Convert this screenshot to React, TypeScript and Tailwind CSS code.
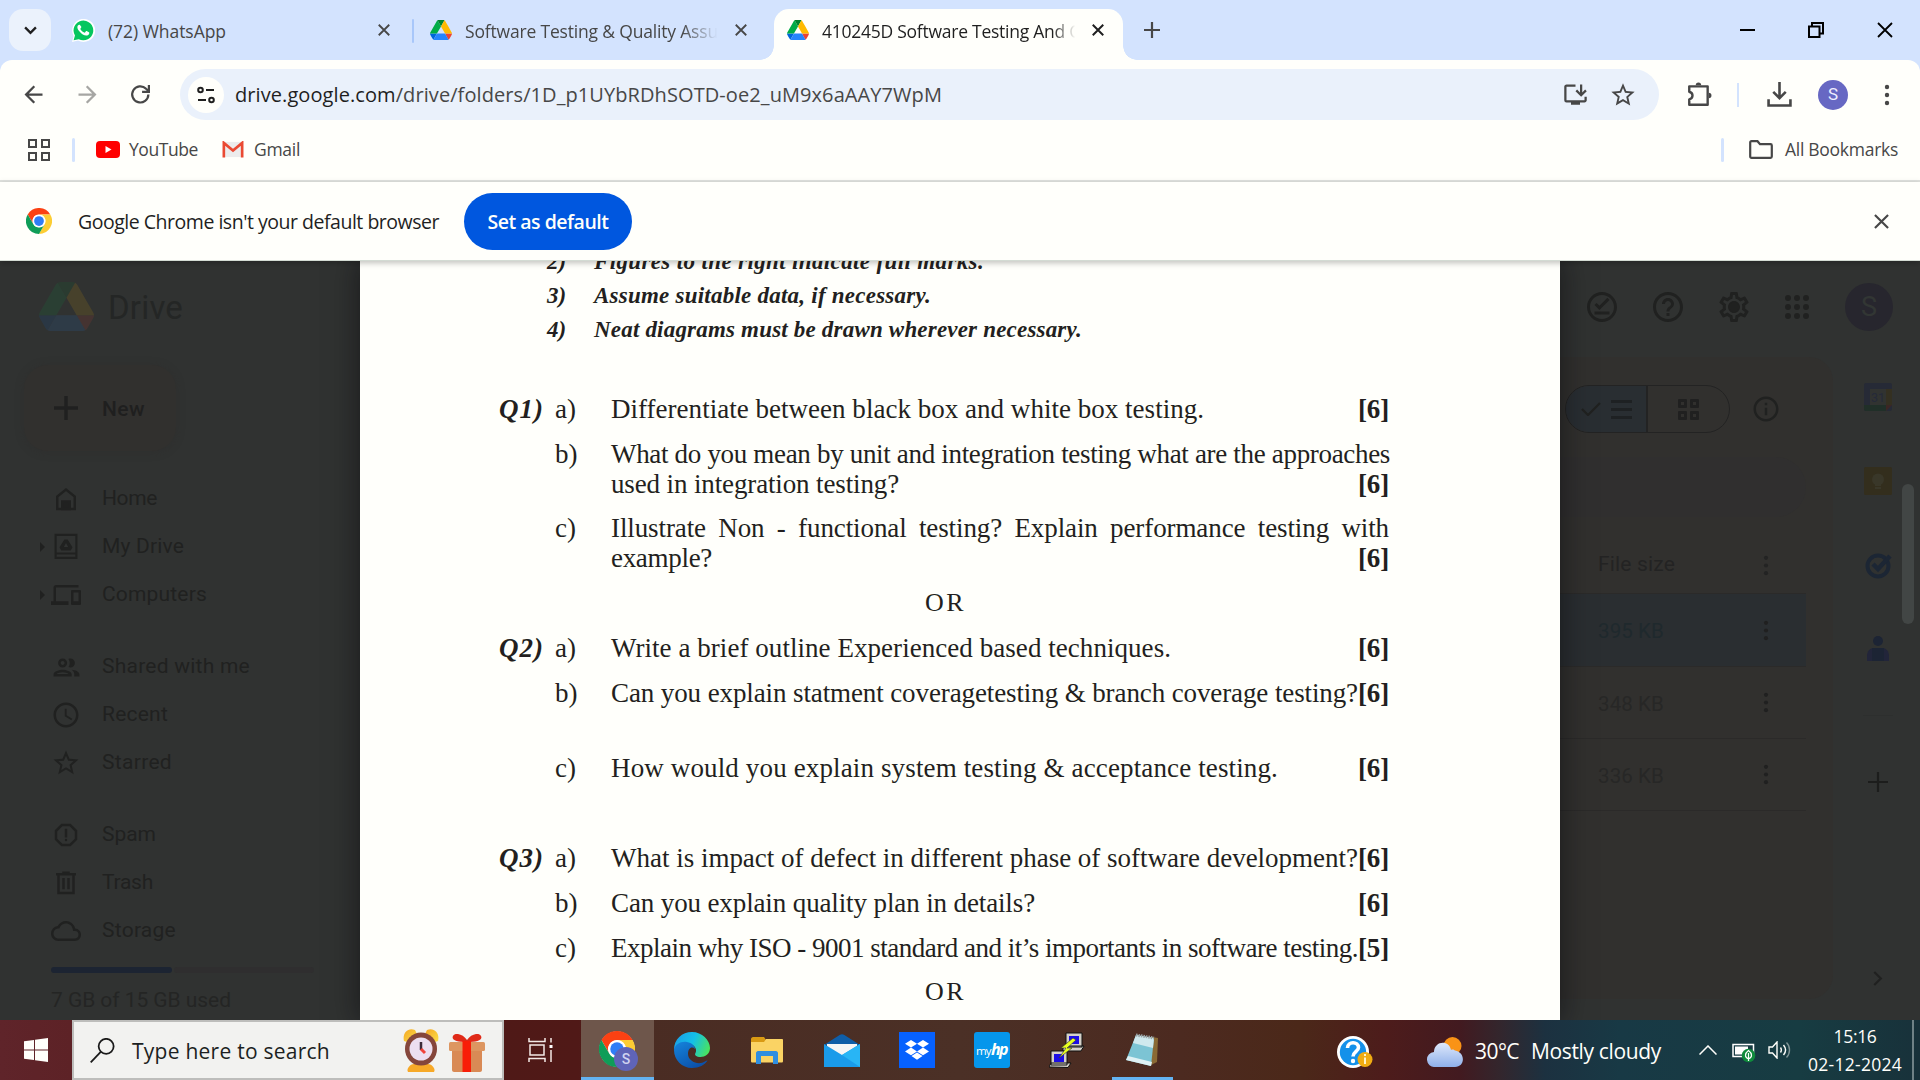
import { useLayoutEffect, useRef, type ReactNode } from "react";
import {
  MdAccessTime,
  MdArrowBack,
  MdArrowForward,
  MdDevices,
  MdHelpOutline,
  MdInfoOutline,
  MdOutlineCloud,
  MdOutlineGroup,
  MdOutlineInstallDesktop,
  MdOutlineOfflinePin,
  MdOutlineReport,
  MdOutlineSettings,
  MdStarBorder,
} from "react-icons/md";

/* Text set to an exact measure by spreading the difference over its letters. */
function Fit({ w, className = "", children }: { w: number; className?: string; children: ReactNode }) {
  const ref = useRef<HTMLSpanElement>(null);
  useLayoutEffect(() => {
    const el = ref.current;
    if (!el) return;
    el.style.letterSpacing = "0px";
    const natural = el.getBoundingClientRect().width;
    const count = (el.textContent || "").length;
    el.style.letterSpacing = `${(w - natural) / count}px`;
  }, [w]);
  return (
    <span ref={ref} className={`inline-block shrink-0 whitespace-pre ${className}`}>
      {children}
    </span>
  );
}

function DriveLogo({ className }: { className?: string }) {
  return (
    <svg viewBox="0 0 87.3 78" className={className} preserveAspectRatio="none">
      <path fill="#0066da" d="m6.6 66.85 3.85 6.65c.8 1.4 1.95 2.5 3.3 3.3l13.75-23.8h-27.5c0 1.55.4 3.1 1.2 4.5z" />
      <path fill="#00ac47" d="m43.65 25-13.75-23.8c-1.35.8-2.5 1.9-3.3 3.3l-25.4 44a9.06 9.06 0 0 0 -1.2 4.5h27.5z" />
      <path fill="#ea4335" d="m73.55 76.8c1.35-.8 2.5-1.9 3.3-3.3l1.6-2.75 7.65-13.25c.8-1.4 1.2-2.95 1.2-4.5h-27.502l5.852 11.5z" />
      <path fill="#00832d" d="m43.65 25 13.75-23.8c-1.35-.8-2.9-1.2-4.5-1.2h-18.5c-1.6 0-3.15.45-4.5 1.2z" />
      <path fill="#2684fc" d="m59.8 53h-32.3l-13.75 23.8c1.35.8 2.9 1.2 4.5 1.2h50.8c1.6 0 3.15-.45 4.5-1.2z" />
      <path fill="#ffba00" d="m73.4 26.5-12.7-22c-.8-1.4-1.95-2.5-3.3-3.3l-13.75 23.8 16.15 28h27.45c0-1.55-.4-3.1-1.2-4.5z" />
    </svg>
  );
}

function ChromeLogo({ className }: { className?: string }) {
  return (
    <svg viewBox="0 0 48 48" className={className}>
      <circle cx="24" cy="24" r="23.5" fill="#fff" />
      <path d="M24 12h20.8A24 24 0 0 0 3.2 12l10.4 18A12 12 0 0 1 24 12z" fill="#fb4113" />
      <path d="M34.4 30 24 48A24 24 0 0 0 44.8 12H24a12 12 0 0 1 10.4 18z" fill="#fccd33" />
      <path d="M13.6 30 3.2 12A24 24 0 0 0 24 48l10.4-18a12 12 0 0 1-20.8 0z" fill="#0f9d58" />
      <circle cx="24" cy="24" r="11.5" fill="#fff" />
      <circle cx="24" cy="24" r="9" fill="#2f7df6" />
    </svg>
  );
}

function Cross({ className = "", sw = 2 }: { className?: string; sw?: number }) {
  return (
    <svg viewBox="0 0 16 16" className={className} fill="none" stroke="currentColor" strokeWidth={sw}>
      <path d="M1 1l14 14M15 1L1 15" />
    </svg>
  );
}

function Dots({ className = "" }: { className?: string }) {
  return (
    <svg viewBox="0 0 6 22" className={className} fill="currentColor">
      <circle cx="3" cy="3" r="2.2" />
      <circle cx="3" cy="11" r="2.2" />
      <circle cx="3" cy="19" r="2.2" />
    </svg>
  );
}

function TabStrip() {
  return (
    <div className="flex h-[60px] items-end bg-[#d3e3fe] text-[17.5px] text-[#474747]">
      <div className="mb-[9px] ml-[9px] flex size-[42px] items-center justify-center rounded-[14px] bg-[#ebf2fc]">
        <svg viewBox="0 0 14 10" className="h-[9px] w-[13px]" fill="none" stroke="#1f1f1f" strokeWidth="2.6">
          <path d="M1 1.5l6 6 6-6" />
        </svg>
      </div>

      <div className="flex h-[60px] w-[361px] items-center pl-[21px]">
        <svg viewBox="0 0 24 24" className="size-[23px] shrink-0">
          <path fill="#fff" d="M0 24l1.7-6.2A12 12 0 1 1 6.3 22.400z" />
          <path fill="#06c65f" d="M1.700 22.300l1.400-5A10.300 10.300 0 1 1 7 21z" />
          <path
            fill="#fff"
            d="M8.500 6.500c-.3-.6-.5-.6-.9-.6-1 0-2 1.200-2 2.600 0 1.700 1.300 3.400 2.500 4.800 1.800 2.100 4.400 3.900 6.700 3.900 1.600 0 3-1 3.200-2.200.1-.7 0-1-.3-1.200l-2.400-1.200c-.4-.1-.6 0-.8.3l-.9 1.100c-.2.3-.5.3-.8.2-1.600-.7-3.200-2.100-4-3.600-.1-.3-.1-.5.1-.7l.7-1c.1-.2.200-.4.1-.7z"
          />
        </svg>
        <Fit w={118} className="ml-[13px] pt-[3px]">(72) WhatsApp</Fit>
        <Cross className="ml-auto mr-[22px] size-[12px]" sw={2.4} />
      </div>
      <div className="mb-[17px] h-[24px] w-[2px] rounded bg-[#a8c7fa]" />
      <div className="flex h-[60px] w-[361px] items-center pl-[16px]">
        <DriveLogo className="h-[20px] w-[22px] shrink-0" />
        <div className="ml-[13px] w-[255px] pt-[3px] [mask-image:linear-gradient(to_right,black_85%,transparent_99%)]">
          <Fit w={253}>Software Testing &amp; Quality Assu</Fit>
        </div>
        <Cross className="ml-auto mr-[28px] size-[12px]" sw={2.4} />
      </div>

      <div className="relative -ml-px flex h-[51px] w-[349px] items-center rounded-t-[15px] bg-[#fffffb] pl-[13px] pb-[9px] text-[#1f1f1f]">
        <div className="absolute -left-[14px] bottom-0 size-[14px] bg-[radial-gradient(circle_at_0_0,transparent_13.5px,#fffffb_14px)]" />
        <div className="absolute -right-[14px] bottom-0 size-[14px] bg-[radial-gradient(circle_at_100%_0,transparent_13.5px,#fffffb_14px)]" />
        <DriveLogo className="h-[20px] w-[22px] shrink-0" />
        <div className="ml-[13px] w-[256px] pt-[3px] [mask-image:linear-gradient(to_right,black_90%,transparent_99%)]">
          <Fit w={258}>410245D Software Testing And C</Fit>
        </div>
        <Cross className="ml-auto mr-[19px] size-[12px]" sw={2.6} />
      </div>
      <svg viewBox="0 0 16 16" className="mb-[22px] ml-[21px] size-[16px]" stroke="#474747" strokeWidth="2.2">
        <path d="M8 0v16M0 8h16" />
      </svg>

      <div className="ml-auto mr-[27px] flex h-[60px] items-center gap-[53px] text-black">
        <div className="h-[2px] w-[15px] bg-black" />
        <svg viewBox="0 0 16 16" className="size-[16px]" fill="none" stroke="currentColor" strokeWidth="2">
          <path d="M1 4.500h10.500V15H1zM4 4.500V1h11v10.500h-3.500" />
        </svg>
        <Cross className="size-[16px]" sw={1.8} />
      </div>
    </div>
  );
}

function Toolbar() {
  return (
    <div className="bg-[#d3e3fe]">
      <div className="flex h-[69px] items-center rounded-t-[12px] bg-[#fffffb] text-[#474747]">
        <MdArrowBack className="ml-[20px] size-[27px]" />
        <MdArrowForward className="ml-[27px] size-[27px] text-[#a6a6a3]" />
        <svg viewBox="0 0 20 20" className="ml-[29px] size-[21px]" fill="none" stroke="currentColor" strokeWidth="2.1">
          <path d="M17.500 10a7.700 7.700 0 1 1-2.200-5.500L18 7" />
          <path d="M18 1v6.500h-6.500" />
        </svg>
        <div className="ml-[29px] flex h-[51px] w-[1479px] items-center rounded-full bg-[#eaf1fb] pl-[8px]">
          <div className="flex size-[36px] items-center justify-center rounded-full bg-[#fffffb]">
            <svg viewBox="0 0 18 18" className="size-[18px]" fill="none" stroke="#1f1f1f" strokeWidth="2">
              <circle cx="3.500" cy="4" r="2.300" />
              <path d="M9 4h8M1 14h8" />
              <circle cx="14.500" cy="14" r="2.300" />
            </svg>
          </div>
          <Fit w={707} className="ml-[11px] text-[20px]">
            <span className="text-[#1f1f1f]">drive.google.com</span>/drive/folders/1D_p1UYbRDhSOTD-oe2_uM9x6aAAY7WpM
          </Fit>
          <MdOutlineInstallDesktop className="ml-auto size-[27px]" />
          <MdStarBorder className="ml-[20px] mr-[22px] size-[28px]" />
        </div>
        <svg viewBox="0 0 24 24" className="ml-[27px] size-[26px]" fill="none" stroke="currentColor" strokeWidth="2.200">
          <path d="M3 4h17v17H3v-5c4-1 4-6 0-7z" strokeLinejoin="round" />
          <path d="M9 3a2.500 2.500 0 0 1 5 0zM21 10a2.500 2.500 0 0 1 0 5z" fill="currentColor" stroke="none" />
        </svg>
        <div className="ml-[25px] h-[24px] w-[2px] bg-[#d3e3fe]" />
        <svg viewBox="0 0 24 24" className="ml-[28px] size-[25px]" fill="none" stroke="currentColor" strokeWidth="2.500">
          <path d="M12 0v15M6 9.500l6 6 6-6M1.500 16.500v6h21v-6" />
        </svg>
        <div className="ml-[26px] flex size-[30px] items-center justify-center rounded-full bg-[#6768c3] font-[Roboto] text-[17px] text-[#eef]">
          S
        </div>
        <Dots className="ml-[36px] h-[22px] w-[6px]" />
      </div>
    </div>
  );
}

function BookmarksBar() {
  return (
    <div className="flex h-[53px] items-center border-b-2 border-[#e1e3df] pb-[10px] text-[17.5px] text-[#474747]">
      <div className="ml-[28px] grid size-[22px] grid-cols-2 gap-[4px]">
        {[0, 1, 2, 3].map((i) => (
          <div key={i} className="size-[9px] border-2 border-[#474747]" />
        ))}
      </div>
      <div className="ml-[22px] h-[24px] w-[3px] rounded bg-[#d3e3fe]" />
      <svg viewBox="0 0 24 17" className="ml-[21px] h-[17px] w-[24px]">
        <rect width="24" height="17" rx="4" fill="#f00" />
        <path d="M9.500 5v7l6-3.500z" fill="#fff" />
      </svg>
      <Fit w={69} className="ml-[9px]">YouTube</Fit>
      <svg viewBox="0 0 24 18" className="ml-[23px] h-[17px] w-[24px]">
        <path d="M2 1h20v16H2z" fill="#ececec" />
        <path d="M2.300 17.500V2L12 10l9.700-8v15.500" fill="none" stroke="#ea4a33" strokeWidth="2.800" />
      </svg>
      <Fit w={46} className="ml-[9px]">Gmail</Fit>
      <div className="ml-auto h-[24px] w-[3px] rounded bg-[#d3e3fe]" />
      <svg viewBox="0 0 24 19" className="ml-[25px] h-[19px] w-[24px]" fill="none" stroke="currentColor" strokeWidth="2.200">
        <path d="M2.500 1.200h6l2.500 3h10.500c.8 0 1.300.5 1.300 1.300v11c0 .8-.5 1.300-1.300 1.300h-19c-.8 0-1.300-.5-1.300-1.300v-14c0-.8.5-1.300 1.300-1.300z" />
      </svg>
      <Fit w={113} className="ml-[12px] mr-[22px]">All Bookmarks</Fit>
    </div>
  );
}

function InfoBar() {
  return (
    <div className="relative z-20 flex h-[79px] items-center border-b border-[#d3dbd3] bg-[#fffffb] text-[19.5px] text-[#1f1f1f] shadow-[0_2px_6px_rgba(0,0,0,0.25)]">
      <ChromeLogo className="ml-[26px] size-[26px]" />
      <Fit w={361} className="ml-[26px] pt-[2px]">Google Chrome isn't your default browser</Fit>
      <div className="ml-[25px] flex h-[57px] w-[168px] items-center justify-center rounded-full bg-[#0057df] font-semibold text-[#fffffb]">
        <Fit w={121} className="pt-[2px]">Set as default</Fit>
      </div>
      <Cross className="ml-auto mr-[31px] size-[15px] text-[#474747]" sw={2.3} />
    </div>
  );
}

const glyph = "size-[30px] shrink-0";

const navGroups: { items: { label: string; w: number; icon: ReactNode; expand?: boolean }[] }[] = [
  {
    items: [
      {
        label: "Home",
        w: 55,
        icon: (
          <svg viewBox="0 0 24 24" className={glyph} fill="none" stroke="currentColor" strokeWidth="2">
            <path d="M5 20V10l7-5.500L19 10v10z" />
            <path d="M9 20v-6h6v6z" fill="currentColor" />
          </svg>
        ),
      },
      {
        label: "My Drive",
        w: 82,
        expand: true,
        icon: (
          <svg viewBox="0 0 24 24" className={glyph} fill="none" stroke="currentColor" strokeWidth="1.900">
            <path d="M2.500 1.500h19v21h-19zM2.500 18.500h19" transform="translate(1.500 1) scale(.875)" />
            <path d="M10.700 6h2.600l3.900 6.200-1.400 2.500H8.200l-1.400-2.500zM12 8.700l-1.700 3.300h3.400z" fill="currentColor" fillRule="evenodd" stroke="none" />
          </svg>
        ),
      },
      { label: "Computers", w: 105, expand: true, icon: <MdDevices className={glyph} /> },
    ],
  },
  {
    items: [
      { label: "Shared with me", w: 148, icon: <MdOutlineGroup className="size-[31px] shrink-0" /> },
      { label: "Recent", w: 66, icon: <MdAccessTime className={glyph} /> },
      { label: "Starred", w: 70, icon: <MdStarBorder className={glyph} /> },
    ],
  },
  {
    items: [
      { label: "Spam", w: 54, icon: <MdOutlineReport className={glyph} /> },
      {
        label: "Trash",
        w: 51,
        icon: (
          <svg viewBox="0 0 24 24" className={glyph} fill="none" stroke="currentColor" strokeWidth="2">
            <path d="M4 5h16M6 5v15h12V5M10 8v9M14 8v9M9 3.800h6" />
          </svg>
        ),
      },
      { label: "Storage", w: 74, icon: <MdOutlineCloud className={glyph} /> },
    ],
  },
];

function Sidebar() {
  return (
    <aside className="w-[360px] shrink-0 bg-[#303231] font-[Roboto] text-[#202120]">
      <div className="flex items-center pt-[21px] pl-[39px]">
        <DriveLogo className="h-[49px] w-[55px] opacity-[0.11]" />
        <Fit w={75} className="ml-[14px] pt-[3px] text-[33px] leading-[46px] text-[#242625]">Drive</Fit>
      </div>
      <div className="mt-[34px] ml-[24px] flex h-[86px] w-[152px] items-center rounded-[24px] bg-[#31302e] pl-[30px] shadow-[0_1px_8px_rgba(45,42,43,0.4)]">
        <svg viewBox="0 0 24 24" className="size-[24px]" stroke="#202020" strokeWidth="3.500">
          <path d="M12 0v24M0 12h24" />
        </svg>
        <Fit w={43} className="ml-[24px] pt-[3px] text-[21px] font-medium text-[#1f1f1f]">New</Fit>
      </div>
      <div className="mt-[24px] flex flex-col gap-[24px]">
        {navGroups.map((group, g) => (
          <div key={g}>
            {group.items.map((item) => (
              <div key={item.label} className="flex h-[48px] items-center pl-[40px]">
                <div className="w-[8px]">
                  {item.expand && <div className="size-0 border-y-[5px] border-l-[5px] border-y-transparent border-l-[#202120]" />}
                </div>
                <div className="flex w-[36px] justify-center">{item.icon}</div>
                <Fit w={item.w} className="ml-[18px] text-[21px]">{item.label}</Fit>
              </div>
            ))}
          </div>
        ))}
      </div>
      <div className="mt-[12px] ml-[51px] flex gap-[2px]">
        <div className="h-[6px] w-[121px] rounded-full bg-[#1c2432]" />
        <div className="h-[6px] w-[140px] rounded-full bg-[#2f2e2f]" />
      </div>
      <Fit w={180} className="mt-[14px] ml-[51px] text-[21px] leading-[26px] text-[#242524]">7 GB of 15 GB used</Fit>
    </aside>
  );
}

type Line = { text: string; w: number; mark?: string; justify?: boolean };
const questions: { q?: string; part?: string; lines?: Line[]; or?: boolean; h: string }[] = [
  { q: "Q1)", part: "a)", h: "h-[45px]", lines: [{ text: "Differentiate between black box and white box testing.", w: 593, mark: "[6]" }] },
  {
    part: "b)",
    h: "h-[74px]",
    lines: [
      { text: "What do you mean by unit and integration testing what are the approaches", w: 779 },
      { text: "used in integration testing?", w: 288, mark: "[6]" },
    ],
  },
  {
    part: "c)",
    h: "h-[74px]",
    lines: [
      { text: "Illustrate Non - functional testing? Explain performance testing with", w: 779, justify: true },
      { text: "example?", w: 101, mark: "[6]" },
    ],
  },
  { or: true, h: "h-[46px]" },
  { q: "Q2)", part: "a)", h: "h-[45px]", lines: [{ text: "Write a brief outline Experienced based techniques.", w: 560, mark: "[6]" }] },
  { part: "b)", h: "h-[75px]", lines: [{ text: "Can you explain statment coveragetesting & branch coverage testing?", w: 747, mark: "[6]" }] },
  { part: "c)", h: "h-[90px]", lines: [{ text: "How would you explain system testing & acceptance testing.", w: 667, mark: "[6]" }] },
  { q: "Q3)", part: "a)", h: "h-[45px]", lines: [{ text: "What is impact of defect in different phase of software development?", w: 747, mark: "[6]" }] },
  { part: "b)", h: "h-[45px]", lines: [{ text: "Can you explain quality plan in details?", w: 424, mark: "[6]" }] },
  { part: "c)", h: "h-[43px]", lines: [{ text: "Explain why ISO - 9001 standard and it’s importants in software testing.", w: 747, mark: "[5]" }] },
  { or: true, h: "h-[30px]" },
];

const notes = [
  { n: "2)", text: "Figures to the right indicate full marks.", w: 390 },
  { n: "3)", text: "Assume suitable data, if necessary.", w: 337 },
  { n: "4)", text: "Neat diagrams must be drawn wherever necessary.", w: 488 },
];

function ExamPage() {
  return (
    <main className="relative z-10 w-[1200px] shrink-0 bg-[#fffffb] font-['Liberation_Serif',serif] text-[#231f20] shadow-[0_0_26px_2px_rgba(10,10,12,0.55)]">
      <div className="-mt-[16px] text-[23px] font-bold italic">
        {notes.map((note) => (
          <div key={note.n} className="flex h-[34px] pl-[187px] leading-[34px]">
            <div className="w-[47px]">
              <Fit w={19}>{note.n}</Fit>
            </div>
            <Fit w={note.w}>{note.text}</Fit>
          </div>
        ))}
      </div>
      <div className="mt-[47px] text-[27px] leading-[30px]">
        {questions.map((row, i) =>
          row.or ? (
            <div key={i} className={`${row.h} pl-[565px]`}>
              <Fit w={41} className="text-[26px]">OR</Fit>
            </div>
          ) : (
            <div key={i} className={`flex ${row.h}`}>
              <div className="w-[195px] shrink-0 pl-[139px] font-bold italic">{row.q && <Fit w={45}>{row.q}</Fit>}</div>
              <div className="w-[56px] shrink-0">{row.part}</div>
              <div className="w-[778px] shrink-0">
                {row.lines?.map((line) => (
                  <div key={line.text} className="flex h-[30px] justify-between whitespace-nowrap">
                    {line.justify ? (
                      <div className="w-full text-[27px] tracking-[-0.100px] [text-align-last:justify] whitespace-normal">{line.text}</div>
                    ) : (
                      <Fit w={line.w}>{line.text}</Fit>
                    )}
                    {line.mark && <Fit w={31} className="-ml-4 font-bold">{line.mark}</Fit>}
                  </div>
                ))}
              </div>
            </div>
          ),
        )}
      </div>
    </main>
  );
}

function FileRow({ size, selected }: { size: string; selected?: boolean }) {
  return (
    <div className={`flex items-center border-b border-[#2b2a29] ${selected ? "h-[73px] bg-[#2a2e31] text-[#1f292d]" : "h-[72px] text-[#272726]"}`}>
      <Fit w={66} className="ml-[38px] pt-[3px] text-[20.5px]">{size}</Fit>
      <Dots className="ml-[99px] h-[21px] w-[6px] text-[#202020]" />
    </div>
  );
}

function RightPane() {
  return (
    <section className="relative flex w-[360px] shrink-0 flex-col bg-[#303231] font-[Roboto] text-[#202120]">
      <div className="flex h-[96px] shrink-0 items-center pb-[4px] pl-[24px]">
        <MdOutlineOfflinePin className="size-[36px]" />
        <MdHelpOutline className="ml-[30px] size-[36px]" />
        <div className="relative ml-[30px] size-[36px]">
          <MdOutlineSettings className="size-[36px]" />
          <div className="absolute inset-[13px] rounded-full bg-[#202120]" />
        </div>
        <div className="ml-[33px] grid grid-cols-3 gap-[3px]">
          {Array.from({ length: 9 }, (_, i) => (
            <div key={i} className="size-[6px] rounded-full bg-[#202120]" />
          ))}
        </div>
        <div className="ml-[36px] flex size-[48px] items-center justify-center rounded-full bg-[#27262e] text-[27px] text-[#323634]">S</div>
      </div>

      <div className="flex">
        <div className="h-[642px] w-[273px] rounded-br-[24px] rounded-tr-[24px] bg-[#31302e]">
          <div className="flex items-center pt-[28px] pl-[5px]">
            <div className="flex h-[48px] w-[165px] overflow-hidden rounded-full border border-[#232323]">
              <div className="flex w-[82px] items-center justify-center gap-[10px] border-r-2 border-[#232323] bg-[#292e32]">
                <svg viewBox="0 0 20 14" className="h-[14px] w-[20px]" fill="none" stroke="currentColor" strokeWidth="2.200">
                  <path d="M1 7l6 6L19 1" />
                </svg>
                <div className="flex w-[21px] flex-col gap-[5px]">
                  <div className="h-[3px] bg-[#1e2123]" />
                  <div className="h-[3px] bg-[#1e2123]" />
                  <div className="h-[3px] bg-[#1e2123]" />
                </div>
              </div>
              <div className="flex flex-1 items-center justify-center">
                <div className="grid grid-cols-2 gap-[3px]">
                  {[0, 1, 2, 3].map((i) => (
                    <div key={i} className="size-[9px] rounded-[1px] border-3 border-[#202020]" />
                  ))}
                </div>
              </div>
            </div>
            <MdInfoOutline className="ml-[21px] size-[30px]" />
          </div>
          <div className="mt-[24px] h-[60px] w-[246px] rounded-r-full bg-[#302f2f]" />
          <div className="w-[246px]">
            <div className="flex h-[77px] items-center border-b border-[#2b2a29] pt-[20px]">
              <Fit w={77} className="ml-[38px] text-[21px] text-[#232323]">File size</Fit>
              <Dots className="ml-[88px] h-[21px] w-[6px] text-[#232323]" />
            </div>
            <FileRow size="395 KB" selected />
            <FileRow size="348 KB" />
            <FileRow size="336 KB" />
          </div>
        </div>

        <div className="flex w-[87px] flex-col items-center pt-[26px] pl-[3px]">
          <svg viewBox="0 0 28 28" className="size-[28px]">
            <rect width="28" height="28" rx="2" fill="#262a36" />
            <path d="M22 6h6v16h-6z" fill="#343021" />
            <path d="M0 22h22v6H2a2 2 0 0 1-2-2z" fill="#202f28" />
            <path d="M22 22h6l-6 6z" fill="#3c2624" />
            <path d="M6 6h16v16H6z" fill="#313331" />
            <text x="14" y="18.500" fontSize="12.500" textAnchor="middle" fill="#252a39">31</text>
          </svg>
          <svg viewBox="0 0 28 28" className="mt-[56px] size-[28px]">
            <rect width="28" height="28" rx="1.500" fill="#332e1d" />
            <circle cx="14" cy="12.500" r="6" fill="#393729" />
            <path d="M11 17h6v2h-6zM11 20h6v2h-6z" fill="#393729" />
          </svg>
          <svg viewBox="0 0 28 28" className="mt-[56px] size-[28px]" fill="none" stroke="#1c2634">
            <circle cx="14" cy="15" r="10.500" strokeWidth="4" />
            <path d="M9 13l5 5L26 5" strokeWidth="4.500" />
          </svg>
          <svg viewBox="0 0 24 26" className="mt-[57px] h-[26px] w-[24px]" fill="#1c2434">
            <circle cx="12" cy="5" r="5" />
            <path d="M1 25v-5c0-5 3-8 7-8h8c4 0 7 3 7 8v5z" fill="#22253a" />
            <path d="M6 12h12v13H6z" />
          </svg>
          <div className="mt-[53px] h-px w-[30px] bg-[#2d2f2e]" />
          <svg viewBox="0 0 20 20" className="mt-[56px] size-[20px]" stroke="#1c1d1c" strokeWidth="2.200">
            <path d="M10 0v20M0 10h20" />
          </svg>
          <svg viewBox="0 0 10 16" className="mt-[179px] h-[15px] w-[10px]" fill="none" stroke="currentColor" strokeWidth="2.400">
            <path d="M1 1l7 7-7 7" />
          </svg>
        </div>
      </div>
      <div className="absolute top-[223px] right-[6px] h-[140px] w-[12px] rounded-full bg-[#424645]" />
    </section>
  );
}

function AppSlot({ children, className = "" }: { children: ReactNode; className?: string }) {
  return <div className={`flex h-full w-[75px] shrink-0 items-center justify-center ${className}`}>{children}</div>;
}

function Taskbar() {
  return (
    <footer className="flex h-[60px] items-center bg-[linear-gradient(to_right,#5f242a_0px,#5d2226_72px,#4f1917_504px,#501917_578px,#4a2c23_640px,#4b3026_960px,#4c2a20_1180px,#4b2819_1300px,#4d1c1b_1385px,#421a20_1460px,#33262d_1500px,#1c3140_1545px,#183945_1620px,#173c42_1800px,#18313a_1920px)] text-[#fffffb]">
      <div className="flex h-full w-[72px] items-center justify-center">
        <svg viewBox="0 0 24 24" className="size-[24px]" fill="currentColor">
          <path d="M0 3.300L10 2v9.500H0zM11 1.800L24 0v11.500H11zM0 12.500h10V22L0 20.700zM11 12.500h13V24l-13-1.800z" />
        </svg>
      </div>

      <div className="flex h-full w-[432px] items-center border-2 border-[#bdbdbb] bg-[#f2f2f0] text-[#1c1f22]">
        <svg viewBox="0 0 24 24" className="ml-[16px] size-[25px]" fill="none" stroke="#1a1a1a" strokeWidth="1.700">
          <circle cx="15.500" cy="8" r="7.200" />
          <path d="M10.300 13.300L.7 23.300" />
        </svg>
        <Fit w={198} className="ml-[17px] pt-[4px] text-[21px]">Type here to search</Fit>
        <svg viewBox="0 0 36 44" className="ml-[73px] h-[44px] w-[36px]">
          <defs>
            <linearGradient id="bell" x1="0" y1="0" x2="1" y2="1">
              <stop offset="0" stopColor="#f5a623" />
              <stop offset="1" stopColor="#fbe04a" />
            </linearGradient>
          </defs>
          <path d="M1 13C-1 5 5-1 12 2l2 4-10 8z" fill="url(#bell)" />
          <path d="M35 13c2-8-4-14-11-11l-2 4 10 8z" fill="url(#bell)" />
          <path d="M5 44c-2-3 2-8 6-8h14c4 0 8 5 6 8z" fill="#f7a928" />
          <ellipse cx="18" cy="21" rx="16" ry="16.500" fill="#85463b" />
          <circle cx="18" cy="21" r="11.500" fill="#ecdff0" />
          <path d="M18 14v8" stroke="#3c2a3a" strokeWidth="2.500" />
          <path d="M18 21l4 4" stroke="#f0433a" strokeWidth="3" />
        </svg>
        <svg viewBox="0 0 36 38" className="mt-[6px] ml-[10px] h-[38px] w-[36px]">
          <path d="M3 16h30v20c0 1-1 2-2 2H5c-1 0-2-1-2-2z" fill="#d98a55" />
          <rect y="8" width="36" height="9" rx="1.500" fill="#dd9660" />
          <path d="M18 8C8 8 2 6 4 2s10-2 14 4c4-6 12-8 14-4s-4 6-14 6z" fill="#e02a18" />
          <path d="M13.500 7h8.500v31h-8.500z" fill="#f81e08" />
        </svg>
      </div>

      <div className="flex w-[77px] justify-center pr-[4px]">
        <svg viewBox="0 0 26 24" className="h-[24px] w-[26px]" fill="none" stroke="#f3e9e6" strokeWidth="1.500">
          <path d="M1 0v3.500h16V0M2 7h14v10H2zM1 24v-3.500h16V24M23 0v4.500M23 12v12" />
          <path d="M21.500 7h3v3h-3z" fill="#fff" stroke="none" />
        </svg>
      </div>

      <div className="flex h-full items-center">
        <div className="relative flex h-full w-[73px] items-center justify-center border-b-3 border-[#63b3f2] bg-[#6e564b] pr-px">
          <ChromeLogo className="size-[36px]" />
          <div className="absolute top-[27px] left-[33px] flex size-[24px] items-center justify-center rounded-full bg-[#5f64b8] font-[Roboto] text-[14px] font-medium text-[#d0d2f0]">
            S
          </div>
        </div>
        <AppSlot>
          <svg viewBox="0 0 36 36" className="size-[36px]">
            <defs>
              <linearGradient id="edgeTop" x1="0" y1="0.3" x2="1" y2="0.6">
                <stop offset="0" stopColor="#1a9fe6" />
                <stop offset="0.5" stopColor="#14c0e8" />
                <stop offset="1" stopColor="#49e35f" />
              </linearGradient>
              <linearGradient id="edgeBottom" x1="0" y1="0" x2="0.7" y2="1">
                <stop offset="0" stopColor="#1585dd" />
                <stop offset="1" stopColor="#0b4fa8" />
              </linearGradient>
            </defs>
            <path d="M0 18C0 7 8 0 18 0s18 8 18 16c0 6-5 9-9.500 9-4 0-6.500-2-5-4 2-4-1-9-8-9C6 12 1 15 0 18z" fill="url(#edgeTop)" />
            <path d="M0 18c1-6 7-9 13-8 5 1 8 4 8 7-3-3-7-1-7 5s7 10 13 9c3-.5 6-3 6.500-2.500C31 33 25 36 18 36 8 36 0 28 0 18z" fill="url(#edgeBottom)" />
          </svg>
        </AppSlot>
        <AppSlot>
          <svg viewBox="0 0 32 27" className="h-[27px] w-[32px]">
            <path d="M0 2c0-1 1-2 2-2h11l2 3v4H0z" fill="#d99a13" />
            <path d="M0 5h13l2-3h16c.6 0 1 .5 1 1v21c0 1-.5 1.500-1.500 1.500h-29C.500 25.500 0 25 0 24z" fill="#fad364" />
            <path d="M5 27V16c0-1 1-2 2-2h18c1 0 2 1 2 2v11h-5v-8H10v8z" fill="#2f8ee0" />
          </svg>
        </AppSlot>
        <AppSlot>
          <svg viewBox="0 0 36 33" className="h-[33px] w-[36px]">
            <path d="M0 11L16 .8c1.200-.8 2.800-.8 4 0L36 11z" fill="#0f5ea8" />
            <path d="M3 10h30v14H3z" fill="#f6f6f6" />
            <path d="M0 10l18 11L36 10v23H0z" fill="#1a9bea" />
            <path d="M18 21L36 10v23z" fill="#28b5f5" />
          </svg>
        </AppSlot>
        <AppSlot>
          <div className="flex size-[36px] items-center justify-center bg-[#0661fe]">
            <svg viewBox="0 0 24 20" className="h-[20px] w-[24px]" fill="#fff">
              <path d="M6 0l6 3.800-6 3.800L0 3.800zM18 0l6 3.800-6 3.800-6-3.800zM6 7.600l6 3.800-6 3.800-6-3.800zM18 7.600l6 3.800-6 3.800-6-3.800zM12 12.500l5.500 3.600L12 19.700l-5.500-3.600z" />
            </svg>
          </div>
        </AppSlot>
        <AppSlot>
          <div className="flex size-[36px] items-baseline justify-center rounded-[3px] bg-[#0596ec] pt-[9px] text-[11.5px] leading-none tracking-[-0.7px]">
            my<span className="text-[16px] font-bold tracking-[-1.500px] italic">hp</span>
          </div>
        </AppSlot>
        <AppSlot>
          <svg viewBox="0 0 36 36" className="size-[36px]">
            <path d="M17 1h16v14H17zM14 16l3-2h18l-3 5H14zM2 19h16v14H2zM0 35l2-4h20l-3 4.500z" fill="#d4d0c8" stroke="#111" strokeWidth="1" />
            <path d="M20 4h10v8H20zM5 22h10v8H5z" fill="#1b0de6" />
            <path d="M24 6L12 16h5l-7 10 13-10h-5l9-8z" fill="#e9ff1f" stroke="#333" strokeWidth=".6" />
          </svg>
        </AppSlot>
        <AppSlot className="relative">
          <svg viewBox="0 0 34 34" className="size-[34px]">
            <path d="M27 4l6 1-1 24-8 4z" fill="#8a6a35" />
            <path d="M11 2l18 3-3 28L1 27z" fill="#7cc4d4" />
            <path d="M11 2l18 3-1 10L8 10z" fill="#cfe9ee" />
            <path d="M1 27l25 6 1-4L3 23z" fill="#dff1f4" />
            <path d="M11 2l18 3" stroke="#9aa4a6" strokeWidth="3" strokeDasharray="1.500 1" />
          </svg>
          <div className="absolute bottom-0 left-[8px] h-[3px] w-[61px] bg-[#63b3f2]" />
        </AppSlot>
      </div>

      <svg viewBox="0 0 36 33" className="mt-[4px] ml-[158px] h-[33px] w-[36px] shrink-0">
        <circle cx="16" cy="16" r="16" fill="#fff" />
        <circle cx="16" cy="16" r="13.200" fill="#1491ea" />
        <path d="M10.500 12c0-7 11-7 11-.5 0 4-5.500 4.500-5.500 9" fill="none" stroke="#fff" strokeWidth="3.600" />
        <circle cx="16" cy="25" r="2.200" fill="#fff" />
        <circle cx="28" cy="23.500" r="7.500" fill="#f0ac12" />
        <path d="M28 21.500v6.500M28 18v2" stroke="#fff3c9" strokeWidth="2" />
      </svg>
      <svg viewBox="0 0 36 30" className="mt-[4px] ml-[54px] h-[30px] w-[36px] shrink-0">
        <defs>
          <linearGradient id="cloud" x1="0" y1="0" x2="0" y2="1">
            <stop offset="0" stopColor="#dfe9fb" />
            <stop offset="1" stopColor="#8fb0ea" />
          </linearGradient>
        </defs>
        <circle cx="25.500" cy="9" r="9" fill="#f99316" />
        <path d="M8 30a7.500 7.500 0 0 1-1-15C7 4 22 2 24 13c2-1 3 0 4 .5 11 2 10 16.500 0 16.500z" fill="url(#cloud)" />
      </svg>
      <Fit w={44} className="ml-[12px] pt-[4px] text-[21px]">30°C</Fit>
      <Fit w={130} className="ml-[12px] pt-[4px] text-[21px]">Mostly cloudy</Fit>
      <svg viewBox="0 0 18 10" className="ml-[38px] h-[10px] w-[18px] shrink-0" fill="none" stroke="currentColor" strokeWidth="1.500">
        <path d="M.5 9.500L9 1l8.500 8.500" />
      </svg>
      <svg viewBox="0 0 24 20" className="mt-[6px] ml-[15px] h-[20px] w-[24px] shrink-0">
        <path d="M1 1.500h20.500v12H1z" fill="none" stroke="#fff" strokeWidth="1.500" />
        <path d="M3 3.500h13v8H3z" fill="#fff" />
        <circle cx="16.500" cy="12.500" r="6.800" fill="#0f8a3c" />
        <path d="M16.500 7.500c4 3 4 7 0 8.500-4-1.500-4-5.500 0-8.500zM16.500 10v8" fill="none" stroke="#fff" strokeWidth="1.200" />
      </svg>
      <svg viewBox="0 0 23 18" className="ml-[12px] h-[18px] w-[23px] shrink-0" fill="none" stroke="currentColor" strokeWidth="1.400">
        <path d="M1 6h3.500L9 1v16l-4.500-5H1zM12.500 6.500c1 1.500 1 3.500 0 5M15.500 4c2.500 3 2.500 7 0 10" />
        <path d="M18.500 1.500c4 4 4 11 0 15" opacity=".45" />
      </svg>
      <div className="ml-[17px] flex w-[94px] shrink-0 flex-col items-center text-[17.500px] leading-[28px]">
        <Fit w={43}>15:16</Fit>
        <Fit w={94}>02-12-2024</Fit>
      </div>
      <div className="ml-auto mr-[6px] h-full w-[2px] bg-[#6f8186]" />
    </footer>
  );
}

export default function App() {
  return (
    <div className="flex h-[1080px] w-[1920px] flex-col overflow-hidden bg-[#fffffb] font-['Open_Sans',sans-serif]">
      <TabStrip />
      <Toolbar />
      <BookmarksBar />
      <InfoBar />
      <div className="flex h-[759px] shrink-0 overflow-hidden">
        <Sidebar />
        <ExamPage />
        <RightPane />
      </div>
      <Taskbar />
    </div>
  );
}
